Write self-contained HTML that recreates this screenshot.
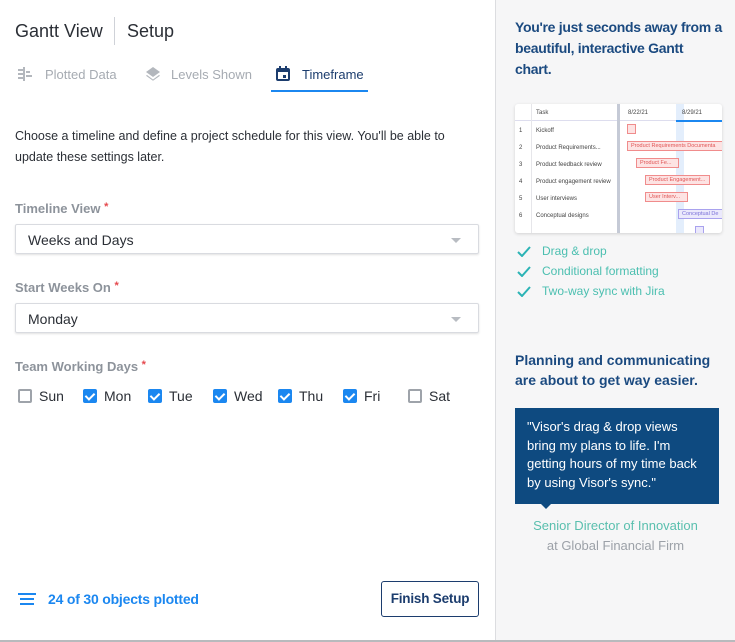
<!DOCTYPE html>
<html><head><style>
*{box-sizing:border-box;margin:0;padding:0}
body{width:735px;height:642px;overflow:hidden;font-family:"Liberation Sans",sans-serif;background:#fff;position:relative;color:#2b2f36}
.abs{position:absolute;white-space:nowrap}
.left{position:absolute;left:0;top:0;width:495px;height:640px;background:#fff}
.right{position:absolute;left:495px;top:0;width:240px;height:640px;background:#f6f6f7;border-left:1px solid #dcdde0}
.bot{position:absolute;left:0;top:640px;width:735px;height:2px;background:#b8babd}
.lbl{font-size:13px;color:#8d939b;font-weight:bold}
.lbl b{color:#e5484d;font-size:11px;vertical-align:top}
.sel{position:absolute;left:15px;width:464px;height:30px;border:1px solid #d9dbe0;border-radius:2px;box-shadow:0 1px 2px rgba(0,0,0,.12);font-size:14px;padding:7px 12px;color:#2b2f36}
.sel:after{content:"";position:absolute;right:17px;top:13px;border:5px solid transparent;border-top:5px solid #b8bcc2;border-bottom:0}
.cb{position:absolute;top:389px;width:14px;height:14px;border-radius:2px}
.on{background:#1b87f0}
.on:after{content:"";position:absolute;left:4px;top:2px;width:4px;height:7px;border:solid #fff;border-width:0 2px 2px 0;transform:rotate(45deg)}
.off{border:2px solid #9ea3aa;background:#fff}
.dl{position:absolute;top:388px;font-size:14px;color:#2b2f36}
.g{position:absolute;font-size:6px;color:#444;white-space:nowrap}
.bar{position:absolute;height:10px;border:1px solid #f08c8c;background:#fde3e3;font-size:5.5px;color:#e05555;padding-left:3px;line-height:8px;overflow:hidden;white-space:nowrap}
.ck{position:absolute;left:21px;font-size:12px;color:#4bbfb0;width:210px;height:16px}
.ck svg{position:absolute;left:0;top:2px}
.ck span{position:absolute;left:25px;top:0;white-space:nowrap}
</style></head><body>
<div class="left">
<div class="abs" style="left:15px;top:21px;font-size:18px;color:#2b2f36">Gantt View</div>
<div style="position:absolute;left:114px;top:17px;width:1px;height:28px;background:#cfd2d8"></div>
<div class="abs" style="left:127px;top:21px;font-size:18px;color:#2b2f36">Setup</div>
<svg class="abs" style="left:18px;top:67px" width="14" height="14" viewBox="0 0 14 14" fill="#b3b7bd"><rect x="5" y="0" width="2" height="14"/><rect x="0" y="2" width="5" height="2"/><rect x="0" y="6" width="5" height="2"/><rect x="0" y="10" width="5" height="2"/><rect x="8" y="4" width="4" height="2"/><rect x="8" y="8" width="6" height="2"/></svg>
<div class="abs" style="left:45px;top:67px;font-size:13px;color:#a6abb2">Plotted Data</div>
<svg class="abs" style="left:145px;top:66px" width="16" height="16" viewBox="0 0 16 16" fill="#b3b7bd"><path d="M8 1L1 6l7 5 7-5z"/><path d="M2 9l6 4.5L14 9l1 .8-7 5-7-5z"/></svg>
<div class="abs" style="left:171px;top:67px;font-size:13px;color:#a6abb2">Levels Shown</div>
<svg class="abs" style="left:276px;top:66px" width="14" height="15" viewBox="0 0 14 15"><rect x="1" y="3" width="12" height="11" rx="1" fill="none" stroke="#1c3d6e" stroke-width="2"/><rect x="1" y="3" width="12" height="3" fill="#1c3d6e"/><rect x="3" y="0" width="2" height="4" fill="#1c3d6e"/><rect x="9" y="0" width="2" height="4" fill="#1c3d6e"/><rect x="7" y="9" width="3" height="3" fill="#1c3d6e"/></svg>
<div class="abs" style="left:302px;top:67px;font-size:13px;color:#1c3d6e">Timeframe</div>
<div style="position:absolute;left:271px;top:90px;width:97px;height:2px;background:#1b87f0"></div>
<div class="abs" style="left:15px;top:126px;font-size:12.5px;line-height:21px;color:#2b2f36;white-space:normal;width:470px">Choose a timeline and define a project schedule for this view. You'll be able to update these settings later.</div>
<div class="abs lbl" style="left:15px;top:201px">Timeline View <b>*</b></div>
<div class="sel" style="top:224px">Weeks and Days</div>
<div class="abs lbl" style="left:15px;top:280px">Start Weeks On <b>*</b></div>
<div class="sel" style="top:303px">Monday</div>
<div class="abs lbl" style="left:15px;top:359px">Team Working Days <b>*</b></div>
<div class="cb off" style="left:18px"></div><div class="dl" style="left:39px">Sun</div>
<div class="cb on" style="left:83px"></div><div class="dl" style="left:104px">Mon</div>
<div class="cb on" style="left:148px"></div><div class="dl" style="left:169px">Tue</div>
<div class="cb on" style="left:213px"></div><div class="dl" style="left:234px">Wed</div>
<div class="cb on" style="left:278px"></div><div class="dl" style="left:299px">Thu</div>
<div class="cb on" style="left:343px"></div><div class="dl" style="left:364px">Fri</div>
<div class="cb off" style="left:408px"></div><div class="dl" style="left:429px">Sat</div>
<svg class="abs" style="left:18px;top:593px" width="18" height="12"><rect x="0" y="0" width="18" height="2" fill="#1b87f0"/><rect x="2" y="5" width="14" height="2" fill="#1b87f0"/><rect x="2" y="10" width="14" height="2" fill="#1b87f0"/></svg>
<div class="abs" style="left:48px;top:591px;font-size:14px;font-weight:bold;color:#1b87f0;letter-spacing:-0.2px">24 of 30 objects plotted</div>
<div style="position:absolute;left:381px;top:581px;width:98px;height:36px;border:1px solid #1c3d6e;border-radius:3px;font-size:13.5px;font-weight:bold;color:#1c3d6e;text-align:center;line-height:34px;letter-spacing:-0.2px">Finish Setup</div>
</div>
<div class="right">
<div class="abs" style="left:19px;top:17px;font-size:14px;font-weight:bold;color:#1b4a80;line-height:21px;letter-spacing:-0.3px">You're just seconds away from a<br>beautiful, interactive Gantt<br>chart.</div>
<div style="position:absolute;left:19px;top:104px;width:207px;height:129px;background:#fff;border-radius:3px;box-shadow:0 1px 3px rgba(0,0,0,.15);overflow:hidden">
 <div style="position:absolute;left:0;top:0;width:207px;height:17px;border-bottom:1px solid #dde"></div>
 <div style="position:absolute;left:102px;top:0;width:3px;height:129px;background:#c5cad6"></div>
 <div style="position:absolute;left:16px;top:0;width:1px;height:129px;background:#e6e6ea"></div>
 <div style="position:absolute;left:161px;top:0;width:8px;height:129px;background:#e3eefc"></div>
 <div style="position:absolute;left:161px;top:16px;width:46px;height:2px;background:#1b87f0"></div>
 <div class="g" style="left:21px;top:6px">Task</div>
 <div class="g" style="left:113px;top:6px">8/22/21</div>
 <div class="g" style="left:167px;top:6px">8/29/21</div>
 <div class="g" style="left:4px;top:24px">1</div><div class="g" style="left:21px;top:24px">Kickoff</div>
 <div class="g" style="left:4px;top:41px">2</div><div class="g" style="left:21px;top:41px">Product Requirements...</div>
 <div class="g" style="left:4px;top:58px">3</div><div class="g" style="left:21px;top:58px">Product feedback review</div>
 <div class="g" style="left:4px;top:75px">4</div><div class="g" style="left:21px;top:75px">Product engagement review</div>
 <div class="g" style="left:4px;top:92px">5</div><div class="g" style="left:21px;top:92px">User interviews</div>
 <div class="g" style="left:4px;top:109px">6</div><div class="g" style="left:21px;top:109px">Conceptual designs</div>
 <div class="bar" style="left:112px;top:20px;width:9px"></div>
 <div class="bar" style="left:112px;top:37px;width:100px">Product Requirements Documenta</div>
 <div class="bar" style="left:121px;top:54px;width:43px">Product Fe...</div>
 <div class="bar" style="left:130px;top:71px;width:65px">Product Engagement...</div>
 <div class="bar" style="left:130px;top:88px;width:43px">User Interv...</div>
 <div class="bar" style="left:163px;top:105px;width:50px;border-color:#a9a2ee;background:#ebe9fc;color:#7a70d8">Conceptual De</div>
 <div class="bar" style="left:180px;top:122px;width:9px;border-color:#a9a2ee;background:#ebe9fc"></div>
</div>
<div class="ck" style="top:244px"><svg width="14" height="11"><path d="M1 6l4 4 8-9" fill="none" stroke="#2bb3b5" stroke-width="2"/></svg><span>Drag &amp; drop</span></div>
<div class="ck" style="top:264px"><svg width="14" height="11"><path d="M1 6l4 4 8-9" fill="none" stroke="#2bb3b5" stroke-width="2"/></svg><span>Conditional formatting</span></div>
<div class="ck" style="top:284px"><svg width="14" height="11"><path d="M1 6l4 4 8-9" fill="none" stroke="#2bb3b5" stroke-width="2"/></svg><span>Two-way sync with Jira</span></div>
<div class="abs" style="left:19px;top:350px;font-size:14px;font-weight:bold;color:#1b4a80;line-height:20px">Planning and communicating<br>are about to get way easier.</div>
<div style="position:absolute;left:19px;top:408px;width:204px;height:96px;background:#0e4a80;color:#fff;font-size:13px;line-height:18.5px;padding:10px 12px">"Visor's drag &amp; drop views bring my plans to life. I'm getting hours of my time back by using Visor's sync."</div>
<div style="position:absolute;left:45px;top:504px;border:5px solid transparent;border-top:5px solid #0e4a80;border-bottom:0"></div>
<div class="abs" style="left:0;width:239px;text-align:center;top:518px;font-size:13px;color:#59bfae">Senior Director of Innovation</div>
<div class="abs" style="left:0;width:239px;text-align:center;top:538px;font-size:13px;color:#9ca1a8">at Global Financial Firm</div>
</div>
<div class="bot"></div>
</body></html>
